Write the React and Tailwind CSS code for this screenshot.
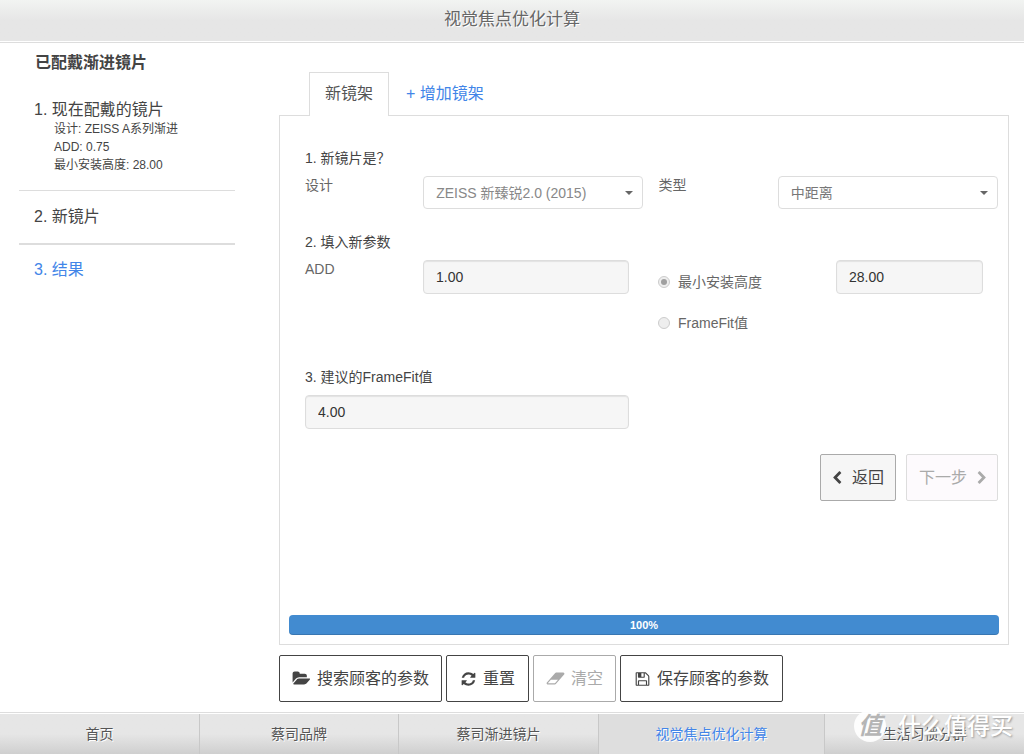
import React, { useState } from 'react';

const icons = {
  folder: {
    box: '0 0 2048 1792',
    d: 'M1943 952q0 31-31 66l-336 396q-43 51-120.5 86.5t-143.5 35.5h-1088q-34 0-60.5-13t-26.5-43q0-31 31-66l336-396q43-51 120.5-86.5t143.5-35.5h1088q34 0 60.5 13t26.5 43zm-343-344v160h-832q-94 0-197 47.5t-164 119.5l-337 396-5 6q0-4-.5-12.5t-.5-12.5v-960q0-92 66-158t158-66h320q92 0 158 66t66 158v32h544q92 0 158 66t66 158z',
  },
  refresh: {
    box: '0 0 1792 1792',
    d: 'M1639 1056q0 5-1 7-64 268-268 434.5t-478 166.5q-146 0-282.5-55t-243.5-157l-129 129q-19 19-45 19t-45-19-19-45v-448q0-26 19-45t45-19h448q26 0 45 19t19 45-19 45l-137 137q71 66 161 102t187 36q134 0 250-65t186-179q11-17 53-117 8-23 30-23h192q13 0 22.5 9.5t9.5 22.5zm25-800v448q0 26-19 45t-45 19h-448q-26 0-45-19t-19-45 19-45l138-138q-148-137-349-137-134 0-250 65t-186 179q-11 17-53 117-8 23-30 23h-199q-13 0-22.5-9.5t-9.5-22.5v-7q65-268 270-434.5t480-166.5q146 0 284 55.5t245 156.5l130-129q19-19 45-19t45 19 19 45z',
  },
  eraser: {
    box: '0 0 2048 1792',
    d: 'M960 1408l336-384h-768l-336 384h768zm1013-1077q15 34 9.5 71.5t-30.5 65.5l-896 1024q-38 44-96 44h-768q-38 0-69.5-20.5t-47.5-54.5q-15-34-9.5-71.5t30.5-65.5l896-1024q38-44 96-44h768q38 0 69.5 20.5t47.5 54.5z',
  },
  save: {
    box: '0 0 1792 1792',
    d: 'M512 1536h768v-384h-768v384zm896 0h128v-896q0-14-10-38.5t-20-34.5l-281-281q-10-10-34-20t-39-10v416q0 40-28 68t-68 28h-576q-40 0-68-28t-28-68v-416h-128v1280h128v-416q0-40 28-68t68-28h832q40 0 68 28t28 68v416zm-384-928v-320q0-13-9.5-22.5t-22.5-9.5h-192q-13 0-22.5 9.5t-9.5 22.5v320q0 13 9.5 22.5t22.5 9.5h192q13 0 22.5-9.5t9.5-22.5zm640 32v928q0 40-28 68t-68 28h-1344q-40 0-68-28t-28-68v-1344q0-40 28-68t68-28h928q40 0 88 20t76 48l280 280q28 28 48 76t20 88z',
  },
  left: {
    box: '0 0 1792 1792',
    d: 'M1427 301l-531 531 531 531q19 19 19 45t-19 45l-166 166q-19 19-45 19t-45-19l-742-742q-19-19-19-45t19-45l742-742q19-19 45-19t45 19l166 166q19 19 19 45t-19 45z',
  },
  right: {
    box: '0 0 1792 1792',
    d: 'M1363 877l-742 742q-19 19-45 19t-45-19l-166-166q-19-19-19-45t19-45l531-531-531-531q-19-19-19-45t19-45l166-166q19-19 45-19t45 19l742 742q19 19 19 45t-19 45z',
  },
};

const Icon = ({ name, className }) => (
  <svg viewBox={icons[name].box} className={`shrink-0 fill-current ${className}`} aria-hidden="true">
    <path d={icons[name].d} />
  </svg>
);

const Select = ({ id, children, className }) => (
  <div className="relative">
    <select
      id={id}
      className={`block w-full h-[33px] appearance-none rounded border border-[#ddd] bg-white pl-3 pr-8 text-sm ${className}`}
    >
      {children}
    </select>
    <svg viewBox="0 0 8 4" className="pointer-events-none absolute right-[10px] top-[15px] w-2 h-1 fill-[#666]">
      <path d="M0 0h8L4 4z" />
    </svg>
  </div>
);

const inputStyle =
  'block w-full h-[34px] rounded border border-[#ddd] bg-[#f6f6f6] px-3 text-sm text-[#333] shadow-[inset_0_1px_1px_rgba(0,0,0,0.08)]';

const radioStyle =
  'appearance-none grid place-content-center size-3 rounded-full border border-[#ccc] bg-[#eee] before:size-[6px] before:rounded-full checked:before:bg-[#a0a0a0]';

const actions = [
  { label: '搜索顾客的参数', icon: 'folder', size: 'w-[19px] h-[17px]', style: 'px-3 border-[#444] text-[#444]' },
  { label: '重置', icon: 'refresh', size: 'w-[17px] h-4', style: 'px-[13px] border-[#444] text-[#444]' },
  { label: '清空', icon: 'eraser', size: 'w-[19px] h-[17px]', style: 'px-3 border-[#aaa] text-[#aaa]', disabled: true },
  { label: '保存顾客的参数', icon: 'save', size: 'w-[17px] h-4', style: 'px-[13px] border-[#444] text-[#444]' },
];

const navItems = ['首页', '蔡司品牌', '蔡司渐进镜片', '视觉焦点优化计算', '生活习惯分群'];

const App = () => {
  const [mode, setMode] = useState('height');

  return (
    <div className="min-h-screen flex flex-col bg-white text-[#444] font-['Liberation_Sans','Noto_Sans_CJK_SC',sans-serif]">
      <header className="h-[43px] border-b border-[#ddd] pb-px">
        <h1 className="h-full bg-linear-to-b from-[#f2f4f2] to-[#e6e6e6] to-50% text-center text-[17px] leading-10 text-[#666] [text-shadow:1px_1px_0_#fff]">
          视觉焦点优化计算
        </h1>
      </header>

      <div className="flex-1 flex">
        {/* Steps */}
        <aside className="w-[216px] ml-[19px] mr-11 shrink-0 pt-[10px]">
          <h2 className="pl-4 text-base leading-5 font-bold mb-[11px]">已配戴渐进镜片</h2>
          <ol>
            <li className="pt-4 pb-4 pl-[15px] border-b border-[#ddd]">
              <div className="text-base leading-5">1. 现在配戴的镜片</div>
              <div className="pl-5 text-xs leading-[18px]">
                <p>设计: ZEISS A系列渐进</p>
                <p>ADD: 0.75</p>
                <p>最小安装高度: 28.00</p>
              </div>
            </li>
            <li className="pt-4 pb-4 pl-[15px] border-b-2 border-[#ddd] text-base leading-5">2. 新镜片</li>
            <li className="pt-[15px] pl-[15px] text-base leading-5 text-[#4285e8]">3. 结果</li>
          </ol>
        </aside>

        <main className="flex-1 flex flex-col pt-[29px] mr-[15px] mb-[10px]">
          {/* Tabs */}
          <div className="flex pl-[30px] text-base">
            <button className="relative z-10 -mb-px h-11 px-[15px] pb-[2px] border border-b-0 border-[#ddd] bg-white text-[#555]">新镜架</button>
            <button className="h-[43px] px-[17px] text-[#4285e8]">+ 增加镜架</button>
          </div>

          <section className="flex-1 flex flex-col border border-[#ddd] pt-8 pb-[9px] px-[9px] text-sm text-[#666]">
            <div className="pl-4 pr-px">
              <h3 className="leading-5 mb-2 text-[#444]">1. 新镜片是？</h3>
              <div className="grid grid-cols-[118fr_220fr_134fr_220fr]">
                <label htmlFor="design" className="leading-[18px]">设计</label>
                <Select id="design" className="text-[#888]">
                  <option>ZEISS 新臻锐2.0 (2015)</option>
                </Select>
                <label htmlFor="type" className="pl-[15px] leading-[18px]">类型</label>
                <Select id="type" className="text-[#777]">
                  <option>中距离</option>
                </Select>
              </div>

              <h3 className="leading-5 mt-[23px] mb-2 text-[#444]">2. 填入新参数</h3>
              <div className="grid grid-cols-[118fr_235fr_178fr_162fr]">
                <label htmlFor="add" className="leading-[18px]">ADD</label>
                <div className="pr-[29px]">
                  <input id="add" className={inputStyle} defaultValue="1.00" />
                </div>
                <div className="pt-3 flex flex-col gap-[21px] leading-5">
                  <label className="flex items-center gap-2">
                    <input type="radio" name="mode" className={radioStyle} checked={mode === 'height'} onChange={() => setMode('height')} />
                    最小安装高度
                  </label>
                  <label className="flex items-center gap-2">
                    <input type="radio" name="mode" className={radioStyle} checked={mode === 'framefit'} onChange={() => setMode('framefit')} />
                    FrameFit值
                  </label>
                </div>
                <div className="pr-[15px]">
                  <input aria-label="最小安装高度" className={inputStyle} defaultValue="28.00" />
                </div>
              </div>

              <h3 className="leading-5 mt-[34px] mb-2 text-[#444]">
                <label htmlFor="framefit">3. 建议的FrameFit值</label>
              </h3>
              <div className="grid grid-cols-[353fr_340fr]">
                <div className="pr-[29px]">
                  <input id="framefit" className={inputStyle} defaultValue="4.00" />
                </div>
              </div>

              <div className="flex justify-end gap-[10px] mt-[25px] text-base">
                <button className="flex items-center gap-2 h-[47px] pl-[9px] pr-[11px] rounded-xs border border-[#aaa] bg-[#f6f6f6] text-[#444]">
                  <Icon name="left" className="size-[14px]" />
                  返回
                </button>
                <button disabled className="flex items-center gap-2 h-[47px] pl-3 pr-2 rounded-xs border border-[#ddd] bg-[#fdfafd] text-[#aaa]">
                  下一步
                  <Icon name="right" className="size-[14px]" />
                </button>
              </div>
            </div>

            <div className="mt-auto h-5 rounded bg-[#428bd0] shadow-[inset_0_-1px_0_rgba(0,0,0,0.15)] text-center text-[11px] leading-5 font-bold text-white">
              100%
            </div>
          </section>

          {/* Actions */}
          <div className="flex gap-1 mt-[10px]">
            {actions.map((action) => (
              <button
                key={action.label}
                disabled={action.disabled}
                className={`flex items-center gap-[6px] h-[47px] rounded-xs border bg-white text-base ${action.style}`}
              >
                <Icon name={action.icon} className={action.size} />
                {action.label}
              </button>
            ))}
          </div>
        </main>
      </div>

      <footer className="relative border-t border-[#ddd] pt-px">
        <nav className="grid grid-cols-[200fr_199fr_200fr_226fr_199fr] text-sm">
          {navItems.map((item, idx) => (
            <a
              key={item}
              href="#"
              className={`h-10 text-center leading-10 border-r border-[#c8c8c8] last:border-r-0 [text-shadow:1px_1px_0_#fff] ${
                idx === 3 ? 'bg-[#dedede] text-[#4285e8]' : 'bg-linear-to-b from-[#e6e6e6] from-50% to-[#cfcfcf] text-[#555]'
              }`}
            >
              {item}
            </a>
          ))}
        </nav>
        {/* Watermark */}
        <div className="pointer-events-none absolute right-[11px] bottom-3 flex items-center gap-3 text-white">
          <span className="grid place-content-center size-8 rounded-full bg-white/90 text-2xl leading-8 font-bold italic text-[#b5b5b5]">值</span>
          <span className="text-[23px] leading-8 font-medium [text-shadow:1px_1px_2px_#999]">什么值得买</span>
        </div>
      </footer>
    </div>
  );
};

export default App;
